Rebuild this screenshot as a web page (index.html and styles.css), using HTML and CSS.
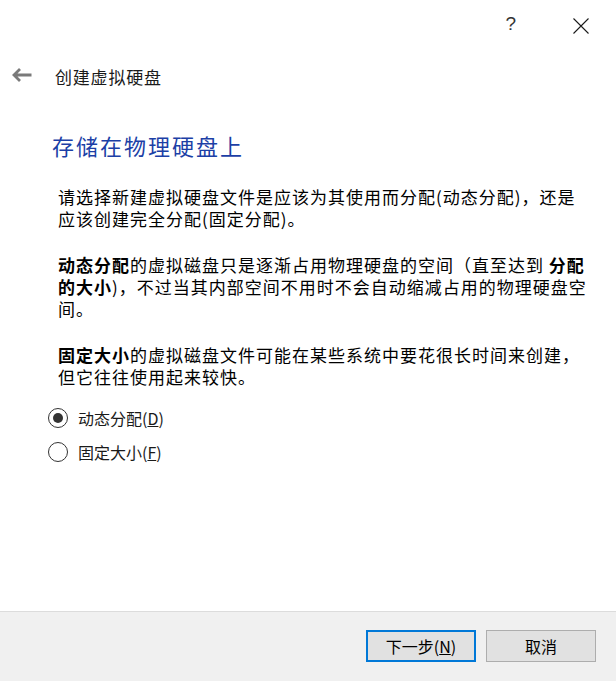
FILE: index.html
```html
<!DOCTYPE html>
<html lang="zh-CN">
<head>
  <meta charset="UTF-8" />
  <title>创建虚拟硬盘</title>
  <link rel="stylesheet" href="styles.css">
</head>
<body>

  <div class="dialog">

    <div class="titlebar">
      <span class="help">?</span>
      <svg class="close" width="16" height="16" viewBox="0 0 16 16">
        <path d="M0.5 0.5 L15.5 15.5 M15.5 0.5 L0.5 15.5" stroke="#1a1a1a" stroke-width="1.1" fill="none"/>
      </svg>
    </div>

    <div class="header">
      <svg class="back" width="20" height="14" viewBox="0 0 20 14">
        <path d="M2 7 H19.5 M8 1 L2 7 L8 13" stroke="#7a7a7a" stroke-width="2.8" fill="none"/>
      </svg>
      <span class="header-title">创建虚拟硬盘</span>
    </div>

    <div class="content">
      <h1>存储在物理硬盘上</h1>

      <p>请选择新建虚拟硬盘文件是应该为其使用而分配(动态分配)，还是<br>应该创建完全分配(固定分配)。</p>

      <p><b>动态分配</b>的虚拟磁盘只是逐渐占用物理硬盘的空间（直至达到 <b>分配的大小</b>)，不过当其内部空间不用时不会自动缩减占用的物理硬盘空间。</p>

      <p><b>固定大小</b>的虚拟磁盘文件可能在某些系统中要花很长时间来创建，<br>但它往往使用起来较快。</p>

      <div class="options">
        <label class="radio">
          <span class="circle checked"></span>
          动态分配(<u>D</u>)
        </label>
        <label class="radio">
          <span class="circle"></span>
          固定大小(<u>F</u>)
        </label>
      </div>
    </div>

    <footer>
      <button class="default">下一步(<u>N</u>)</button>
      <button>取消</button>
    </footer>

  </div>

</body>
</html>
```

FILE: styles.css
```css
body {
  margin: 0;
  background-color: #ffffff;
  font-family: "Noto Sans CJK SC", "Noto Sans", sans-serif;
  color: #000000;
}

.dialog {
  height: 681px;
  display: flex;
  flex-direction: column;
}

.titlebar {
  height: 46px;
  display: flex;
  align-items: center;
  justify-content: flex-end;
  padding-right: 27px;
}

.help {
  font-family: "Liberation Sans", sans-serif;
  font-size: 19px;
  color: #333333;
  margin-right: 57px;
  margin-top: 2px;
}

.close {
  margin-top: 6px;
}

.header {
  height: 60px;
  display: flex;
  align-items: center;
  padding-left: 12px;
}

.back {
  margin-top: -3px;
}

.header-title {
  margin-left: 23px;
  font-size: 17px;
  letter-spacing: 0.8px;
  color: #1a1a1a;
}

.content {
  flex: 1;
  padding-left: 52px;
  padding-right: 18px;
}

.content h1 {
  margin: 24px 0 26px 0;
  font-size: 22px;
  line-height: 30px;
  font-weight: 400;
  letter-spacing: 2px;
  color: #1c3fa6;
}

.content p {
  margin: 0 0 24px 6px;
  font-size: 17px;
  line-height: 22px;
  letter-spacing: 1px;
}

.content b {
  font-weight: 700;
}

.options {
  margin-top: -11px;
  display: flex;
  flex-direction: column;
}

.radio {
  height: 34px;
  display: flex;
  align-items: center;
  margin-left: -4px;
  font-size: 16px;
  color: #1a1a1a;
}

.circle {
  width: 18px;
  height: 18px;
  border: 1px solid #333333;
  border-radius: 50%;
  margin-right: 10px;
  display: flex;
  align-items: center;
  justify-content: center;
}

.circle.checked::after {
  content: "";
  width: 10px;
  height: 10px;
  border-radius: 50%;
  background-color: #333333;
}

footer {
  height: 70px;
  border-top: 1px solid #dcdcdc;
  background-color: #f0f0f0;
  display: flex;
  justify-content: flex-end;
  align-items: flex-start;
  gap: 10px;
  padding: 18px 20px 0 0;
  box-sizing: border-box;
}

footer button {
  width: 110px;
  height: 32px;
  background-color: #e1e1e1;
  border: 1px solid #adadad;
  font-family: "Noto Sans CJK SC", sans-serif;
  font-size: 16px;
  color: #000000;
  padding: 0;
}

footer button.default {
  border: 2px solid #0078d7;
}
```
